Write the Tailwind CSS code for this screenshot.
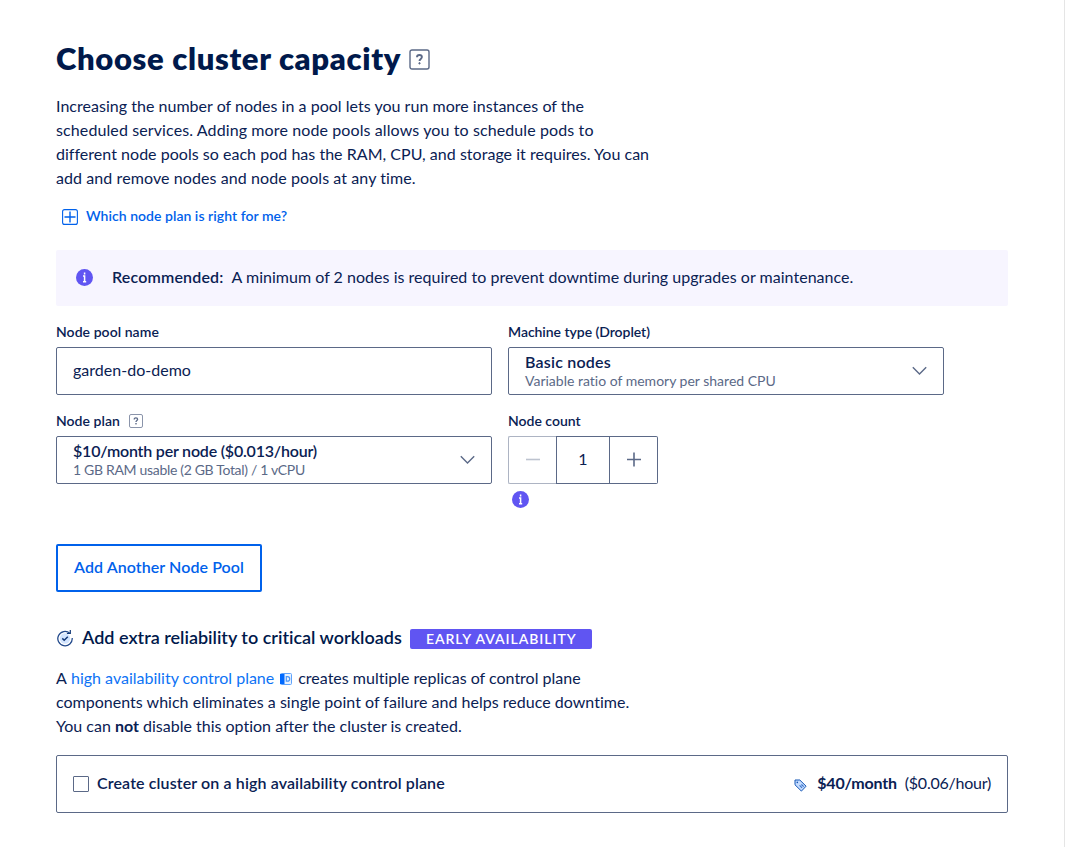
<!DOCTYPE html>
<html lang="en">
<head>
<meta charset="utf-8">
<title>Choose cluster capacity</title>
<script src="https://cdn.jsdelivr.net/npm/@tailwindcss/browser@4"></script>
</head>
<body class="bg-white font-['Lato',sans-serif] text-base leading-6 text-[#0a2153] [font-variant-ligatures:none]">
<main class="flex h-[847px] w-[1065px] flex-col items-start overflow-hidden border-r border-[#e5e5e5] pl-14 whitespace-nowrap">
  <div class="mt-[38px] flex h-10 items-center gap-2">
    <h1 class="text-[31px] leading-10 font-extrabold tracking-[0.65px] text-[#00194b]">Choose cluster capacity</h1>
    <svg class="mt-0.5 size-[21px]" viewBox="0 0 21 21" fill="none" stroke="#5b6987"><rect x="1" y="1" width="19" height="19" rx="2" stroke-width="1.4"/><path d="M8 8.3c0-1.6 1-2.3 2.4-2.3s2.5.8 2.5 2.1c0 1.8-2.4 1.8-2.4 3.8" stroke-width="1.9"/><circle cx="10.5" cy="14.3" r=".7" fill="#5b6987"/></svg>
  </div>
  <p class="mt-4">
    <span class="tracking-[0.024px]">Increasing the number of nodes in a pool lets you run more instances of the</span><br>
    <span class="tracking-[0.11px]">scheduled services. Adding more node pools allows you to schedule pods to</span><br>
    <span class="tracking-[0.028px]">different node pools so each pod has the RAM, CPU, and storage it requires. You can</span><br>
    <span class="tracking-[0.0875px]">add and remove nodes and node pools at any time.</span>
  </p>
  <a class="mt-4 ml-1.5 flex h-5 items-center gap-2 text-sm font-semibold tracking-[0.04px] text-[#0061eb]">
    <svg class="size-4 translate-y-px" viewBox="0 0 16 16" fill="none" stroke="#0061eb"><rect x=".6" y=".6" width="14.8" height="14.8" rx="2" stroke-width="1.1"/><path d="M8 2.5v11M2.5 8h11" stroke-width="1.4"/></svg>
    <span>Which node plan is right for me?</span>
  </a>
  <div class="mt-6 flex h-14 w-[952px] items-center rounded-xs bg-[#f7f5ff] pl-5">
    <svg class="size-[17px] -translate-y-px" viewBox="0 0 17 17"><circle cx="8.5" cy="8.5" r="8.5" fill="#6055f2"/><path d="M8.6 3.6v2M7 7.1h1.6v5.3M7 12.7h3.2" fill="none" stroke="#fff" stroke-width="1.5"/></svg>
    <strong class="ml-[19px] pb-0.5 font-semibold tracking-[0.17px]">Recommended:</strong>
    <span class="ml-2 pb-0.5 tracking-[0.025px]">A minimum of 2 nodes is required to prevent downtime during upgrades or maintenance.</span>
  </div>
  <div class="mt-4 grid grid-cols-[436px_436px] gap-x-4">
    <div>
      <label class="block h-5 text-sm leading-5 font-semibold tracking-[0.06px]">Node pool name</label>
      <div class="mt-[5px] flex h-12 items-center rounded-xs border border-[#5b6987] px-4 pb-0.5 tracking-[0.02px]">garden-do-demo</div>
    </div>
    <div>
      <label class="block h-5 text-sm leading-5 font-semibold tracking-[-0.04px]">Machine type (Droplet)</label>
      <div class="mt-[5px] flex h-12 items-center justify-between rounded-xs border border-[#5b6987] px-4">
        <div class="flex flex-col"><span class="-mt-0.5 mb-px leading-5 font-semibold tracking-[0.22px]">Basic nodes</span><span class="text-sm leading-4 text-[#5b6987]">Variable ratio of memory per shared CPU</span></div>
        <svg class="h-4 w-[15px]" viewBox="0 0 15 16" fill="none" stroke="#5b6987" stroke-width="1.4"><path d="M.8 4.2 7.5 10.9 14.2 4.2"/></svg>
      </div>
    </div>
    <div class="mt-4">
      <label class="flex h-5 items-center gap-[9px] text-sm leading-5 font-semibold tracking-[0.05px]">Node plan
        <svg class="size-3.5" viewBox="0 0 14 14" fill="none" stroke="#5b6987"><rect x=".5" y=".5" width="13" height="13" rx="1.5" stroke="#8a94aa"/><path d="M5.2 5.5c0-1.1.7-1.6 1.7-1.6s1.7.5 1.7 1.4c0 1.3-1.6 1.2-1.6 2.6" stroke-width="1.3"/><circle cx="7" cy="9.8" r=".4" fill="#5b6987"/></svg>
      </label>
      <div class="mt-[5px] flex h-12 items-center justify-between rounded-xs border border-[#5b6987] px-4">
        <div class="flex flex-col"><span class="-mt-0.5 mb-px leading-5 font-semibold tracking-[-0.2px]">$10/month per node ($0.013/hour)</span><span class="text-sm leading-4 tracking-[-0.32px] text-[#5b6987]">1 GB RAM usable (2 GB Total) / 1 vCPU</span></div>
        <svg class="h-4 w-[15px]" viewBox="0 0 15 16" fill="none" stroke="#5b6987" stroke-width="1.4"><path d="M.8 4.2 7.5 10.9 14.2 4.2"/></svg>
      </div>
    </div>
    <div class="mt-4">
      <label class="block h-5 text-sm leading-5 font-semibold">Node count</label>
      <div class="mt-[5px] flex h-12 w-[150px]">
        <div class="flex w-12 items-center justify-center rounded-l-xs border border-r-0 border-[#adb4c3]"><svg class="size-4" viewBox="0 0 16 16"><path d="M1 7.5h14" stroke="#bdc3cf" stroke-width="1.6"/></svg></div>
        <div class="flex w-[54px] items-center justify-center border border-[#5b6987] pb-0.5">1</div>
        <div class="flex w-12 items-center justify-center rounded-r-xs border border-l-0 border-[#5b6987]"><svg class="size-4" viewBox="0 0 16 16"><path d="M1 7.5h14M8 .5v14" stroke="#5b6987" stroke-width="1.6"/></svg></div>
      </div>
      <svg class="mt-[7px] ml-1 size-[17px]" viewBox="0 0 17 17"><circle cx="8.5" cy="8.5" r="8.5" fill="#6055f2"/><path d="M8.6 3.6v2M7 7.1h1.6v5.3M7 12.7h3.2" fill="none" stroke="#fff" stroke-width="1.5"/></svg>
    </div>
  </div>
  <button class="mt-9 flex h-12 w-[206px] items-center justify-center rounded-xs border-2 border-[#0061eb] pb-0.5 font-semibold tracking-[0.08px] text-[#0061eb]">Add Another Node Pool</button>
  <div class="mt-[33px] flex h-6 items-center">
    <svg class="mt-0.5 size-[18px]" viewBox="0 0 18 18" fill="none"><circle cx="9" cy="9.5" r="5.2" fill="#d3e5ff"/><path d="M13.8 4.2A7.2 7.2 0 1 0 16.2 9" stroke="#234a8c" stroke-width="1.3"/><path d="M14.3 1v3.5h-3.4" stroke="#123877" stroke-width="1.2"/><path d="m6.3 9.4 1.9 1.8 3.6-3.5" stroke="#123877" stroke-width="1.5"/></svg>
    <h2 class="ml-2 text-lg leading-6 font-semibold text-[#00194b]">Add extra reliability to critical workloads</h2>
    <span class="mt-[3px] ml-2 flex h-5 w-[182px] items-center justify-center rounded-xs bg-[#6055f2] pl-px text-sm leading-5 font-semibold tracking-[0.95px] text-white">EARLY AVAILABILITY</span>
  </div>
  <p class="mt-[17px]">
    <span class="flex items-center"><span class="w-[15px]">A</span><span class="text-[#0d73f5]">high availability control plane</span><svg class="mr-1.5 ml-1.5 size-3 translate-y-px" viewBox="0 0 12 12"><rect x=".5" y=".5" width="11" height="11" rx="1" fill="#e8f2ff" stroke="#5fa3fb"/><path d="M0 1h4.5v10H0z" fill="#0069ff"/><path d="M6.3 3.7h1.2a2.2 2.2 0 0 1 0 4.4H6.3z" fill="none" stroke="#4a95f8" stroke-width="1.2"/></svg><span>creates multiple replicas of control plane</span></span>
    <span class="tracking-[0.016px]">components which eliminates a single point of failure and helps reduce downtime.</span><br>
    You can <strong class="font-bold">not</strong> disable this option after the cluster is created.
  </p>
  <div class="mt-[17px] flex h-[58px] w-[952px] items-center rounded-xs border border-[#5b6987] px-4">
    <span class="size-4 rounded-[1px] border border-[#5b6987]"></span>
    <span class="ml-2 pb-0.5 font-semibold tracking-[0.12px]">Create cluster on a high availability control plane</span>
    <svg class="mt-0.5 mr-2.5 ml-auto size-[13px]" viewBox="0 0 13 13" fill="none"><path d="M1 1h4.8l6.3 6.2-4.7 4.9L1 5.8z" fill="#c5dcff" stroke="#1556b5" stroke-width="1"/><circle cx="3.3" cy="3.4" r=".8" fill="#1556b5"/><path d="m5.6 6.3 2.5 2.5M7.4 5.5l2.3 2.2" stroke="#3772c8" stroke-width="1.1"/></svg>
    <strong class="pb-0.5 font-bold tracking-[-0.2px]">$40/month</strong>
    <span class="ml-2 pb-0.5 tracking-[-0.24px]">($0.06/hour)</span>
  </div>
</main>
</body>
</html>
